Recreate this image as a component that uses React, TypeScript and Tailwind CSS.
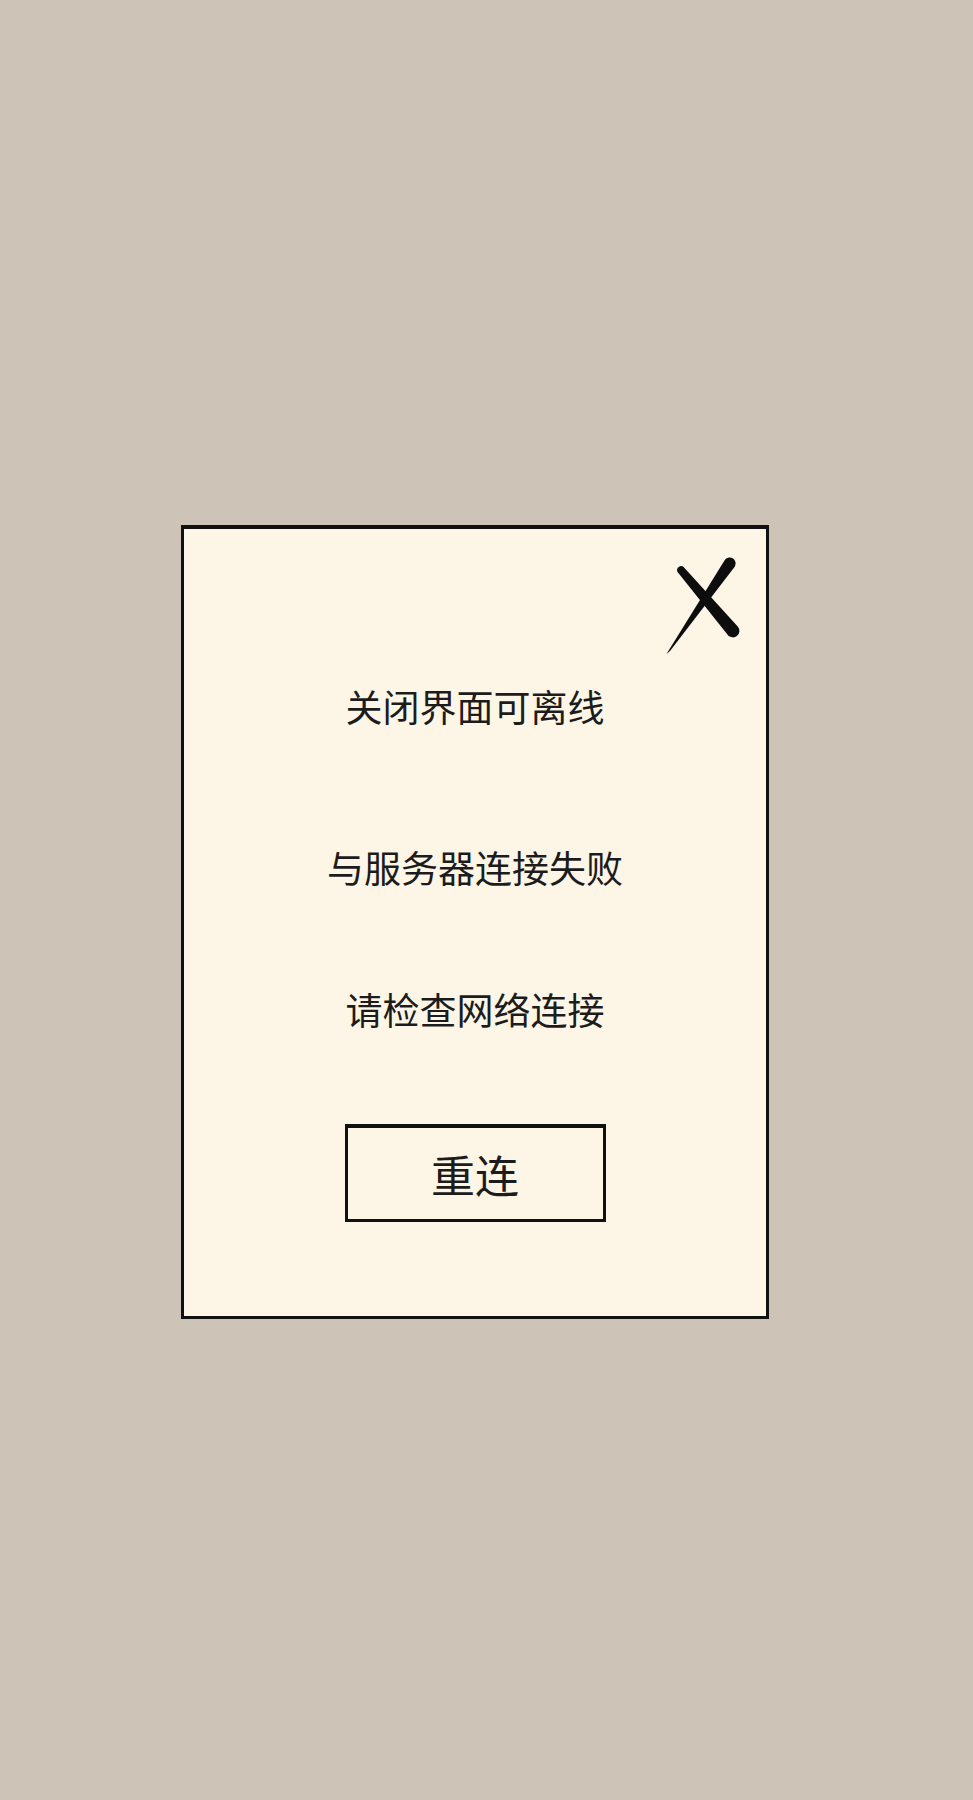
import React from "react";

const font = { fontFamily: '"Noto Sans CJK SC", "Noto Sans", sans-serif' };

function CloseMark() {
  return (
    <svg
      className="absolute left-[481px] top-[22px]"
      width="82"
      height="110"
      viewBox="0 0 82 110"
    >
      <path
        d="M12.96 21.59 A4 4 0 0 1 19.04 16.41 L72.95 75.79 A6.5 6.5 0 0 1 63.05 84.21 Z"
        fill="#0d0d0d"
      />
      <path
        d="M60.1 8.6 A6 6 0 0 1 69.9 15.4 L5 100 L1.5 103 Z"
        fill="#0d0d0d"
      />
    </svg>
  );
}

export default function App() {
  return (
    <div className="min-h-[1800px] w-full bg-[#cdc3b6] pt-[525px]" style={font}>
      <div className="relative ml-[181px] flex h-[794px] w-[588px] flex-col items-center border-[3px] border-t-[4px] border-[#111] bg-[#fdf6e7] pt-[157px] text-[#1c1c1c]">
        <CloseMark />
        <div className="h-[40px] text-[37px] leading-[40px]">关闭界面可离线</div>
        <div className="mt-[121px] h-[40px] text-[37px] leading-[40px]">与服务器连接失败</div>
        <div className="mt-[102px] h-[40px] text-[37px] leading-[40px]">请检查网络连接</div>
        <div className="mt-[95px] flex h-[98px] w-[261px] items-center justify-center border-[3px] border-t-[4px] border-[#111] text-[44px] leading-none">
          重连
        </div>
      </div>
    </div>
  );
}
